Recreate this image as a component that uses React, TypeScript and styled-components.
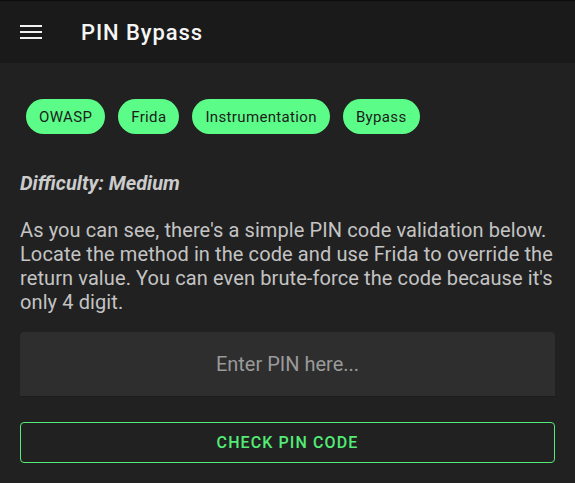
import React, { useState } from 'react';
import styled, { createGlobalStyle } from 'styled-components';

const GlobalStyle = createGlobalStyle`
  html, body {
    margin: 0;
    padding: 0;
    background: #212121;
  }
  body {
    font-family: Roboto, 'Noto Sans', sans-serif;
  }
`;

const Screen = styled.div`
  width: 575px;
  height: 483px;
  background: #212121;
  border-top: 1px solid #0c0c0c;
  box-sizing: border-box;
  overflow: hidden;
`;

const TopBar = styled.header`
  height: 62px;
  background: #1a1a1a;
  display: flex;
  align-items: center;
  padding: 0 20px;
  gap: 39px;
`;

const MenuButton = styled.button`
  width: 22px;
  height: 14px;
  padding: 0;
  border: 0;
  background: transparent;
  display: flex;
  flex-direction: column;
  justify-content: space-between;
  cursor: pointer;

  span {
    display: block;
    height: 2px;
    background: #f2f2f2;
  }
`;

const Title = styled.h1`
  margin: 0;
  font-size: 22px;
  font-weight: 500;
  color: #f5f5f5;
  letter-spacing: 0.9px;
`;

const Content = styled.main`
  padding: 36px 20px 0;
`;

const ChipRow = styled.div`
  display: flex;
  gap: 13px;
  padding-left: 6px;
  flex-wrap: wrap;
`;

const Chip = styled.span`
  height: 35px;
  display: inline-flex;
  align-items: center;
  padding: 0 13px;
  border-radius: 18px;
  background: #5cfc88;
  color: #1c1c1c;
  font-size: 15px;
  letter-spacing: 0.35px;
`;

const Difficulty = styled.p`
  margin: 37px 0 0;
  font-size: 20px;
  font-weight: 700;
  font-style: italic;
  color: #cccccc;
`;

const Description = styled.p`
  margin: 23px -3px 0 0;
  font-size: 20px;
  line-height: 24px;
  letter-spacing: 0.1px;
  color: #c4c4c4;
`;

const PinInput = styled.input`
  display: block;
  margin-top: 18px;
  width: 100%;
  height: 65px;
  box-sizing: border-box;
  border: 0;
  border-bottom: 1px solid #1c1c1c;
  border-radius: 4px 4px 0 0;
  background: #2e2e2e;
  color: #e0e0e0;
  font-family: Roboto, sans-serif;
  font-size: 20px;
  text-align: center;
  outline: none;

  &::placeholder {
    color: #9a9a9a;
  }
`;

const CheckButton = styled.button`
  display: block;
  margin-top: 25px;
  width: 100%;
  height: 41px;
  box-sizing: border-box;
  border: 1.5px solid #52ec76;
  border-radius: 4px;
  background: transparent;
  color: #52ec76;
  font-family: Roboto, sans-serif;
  font-size: 16px;
  font-weight: 500;
  letter-spacing: 1.1px;
  cursor: pointer;
`;

const tags = ['OWASP', 'Frida', 'Instrumentation', 'Bypass'];

const App: React.FC = () => {
  const [pin, setPin] = useState<string>('');

  return (
    <>
      <GlobalStyle />
      <Screen>
        <TopBar>
          <MenuButton aria-label="menu">
            <span />
            <span />
            <span />
          </MenuButton>
          <Title>PIN Bypass</Title>
        </TopBar>
        <Content>
          <ChipRow>
            {tags.map((tag) => (
              <Chip key={tag}>{tag}</Chip>
            ))}
          </ChipRow>
          <Difficulty>Difficulty: Medium</Difficulty>
          <Description>
            As you can see, there's a simple PIN code validation below. Locate the method in the code and use Frida to
            override the return value. You can even brute-force the code because it's only 4 digit.
          </Description>
          <PinInput placeholder="Enter PIN here..." value={pin} onChange={(e) => setPin(e.target.value)} />
          <CheckButton>CHECK PIN CODE</CheckButton>
        </Content>
      </Screen>
    </>
  );
};

export default App;
